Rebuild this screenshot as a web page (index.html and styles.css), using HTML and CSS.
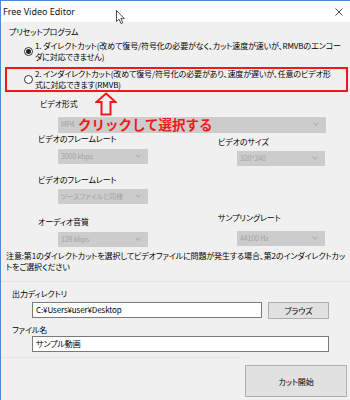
FILE: index.html
```html
<!DOCTYPE html>
<html lang="ja">
<head>
  <meta charset="UTF-8">
  <meta name="viewport" content="width=device-width, initial-scale=1.0">
  <title>Free Video Editor</title>
  <link rel="stylesheet" href="styles.css">
</head>
<body>
  <div class="window">
    <div class="titlebar">
      <span class="title">Free Video Editor</span>
      <svg class="close" width="8" height="8" viewBox="0 0 8 8">
        <path d="M0.5 0.5 L7.5 7.5 M7.5 0.5 L0.5 7.5" stroke="#333" stroke-width="0.9" fill="none"/>
      </svg>
    </div>

    <div class="content">
      <div class="legend">プリセットプログラム</div>

      <div class="option">
        <span class="radio checked"></span>
        <span class="option-text">1. ダイレクトカット(改めて復号/符号化の必要がなく、カット速度が速いが、RMVBのエンコー<br>ダに対応できません)</span>
      </div>

      <div class="option option-marked">
        <span class="radio"></span>
        <span class="option-text">2. インダイレクトカット(改めて復号/符号化の必要があり、速度が遅いが、任意のビデオ形<br>式に対応できます(RMVB)</span>
      </div>

      <div class="label label-format">ビデオ形式</div>
      <div class="select select-wide">MP4<span class="chev"></span></div>

      <div class="row row-first">
        <div class="field">
          <div class="label">ビデオのフレームレート</div>
          <div class="select">3000 kbps<span class="chev"></span></div>
        </div>
        <div class="field field-right">
          <div class="label label-low">ビデオのサイズ</div>
          <div class="select select-right">320*240<span class="chev"></span></div>
        </div>
      </div>

      <div class="row row-second">
        <div class="field">
          <div class="label">ビデオのフレームレート</div>
          <div class="select">ソースファイルと同様<span class="chev"></span></div>
        </div>
      </div>

      <div class="row row-third">
        <div class="field">
          <div class="label label-audio">オーディオ音質</div>
          <div class="select">128 kbps<span class="chev"></span></div>
        </div>
        <div class="field field-right">
          <div class="label">サンプリングレート</div>
          <div class="select select-right select-rate">44100 Hz<span class="chev"></span></div>
        </div>
      </div>

      <p class="note">注意:第1のダイレクトカットを選択してビデオファイルに問題が発生する場合、第2のインダイレクトカッ<br>トをご選択ください</p>

      <div class="divider"></div>

      <div class="label label-out">出力ディレクトリ</div>
      <div class="path-row">
        <div class="textbox textbox-path">C:¥Users¥user¥Desktop</div>
        <div class="button button-browse">ブラウズ</div>
      </div>

      <div class="label label-out label-name">ファイル名</div>
      <div class="textbox textbox-name">サンプル動画</div>

      <div class="divider divider-bottom"></div>

      <div class="button button-start">カット開始</div>
    </div>

    <!-- annotations drawn over the dialog -->
    <svg class="arrow" width="22" height="24" viewBox="0 0 22 24">
      <path d="M11 1.5 L20.5 10 L15.5 10 L15.5 22.5 L6.5 22.5 L6.5 10 L1.5 10 Z" fill="none" stroke="#f01818" stroke-width="2" stroke-linejoin="miter"/>
    </svg>
    <div class="callout">クリックして選択する</div>

    <svg class="cursor" width="10" height="15" viewBox="0 0 10 15">
      <path d="M0.5 0.5 L0.5 11.5 L3 9.2 L5 13.5 L6.8 12.7 L4.9 8.6 L8.3 8.6 Z" fill="#fff" stroke="#222" stroke-width="0.8" stroke-linejoin="round"/>
    </svg>
  </div>
</body>
</html>
```

FILE: styles.css
```css
body {
  margin: 0;
  background: #ffffff;
  font-family: "Noto Sans CJK JP", sans-serif;
  font-size: 8px;
  color: #000;
  font-feature-settings: "palt";
  letter-spacing: -0.12px;
}

.window {
  position: relative;
  width: 349px;
  height: 399px;
  border-top: 1px solid #4a8ad8;
  border-left: 1px solid #4a8ad8;
  background: #f0f0f0;
  overflow: hidden;
}

.titlebar {
  height: 21px;
  background: #fff;
  display: flex;
  align-items: center;
  justify-content: space-between;
  padding: 0 7px 0 2px;
  letter-spacing: 0;
}

.title {
  font-family: "Noto Sans", sans-serif;
  font-size: 9px;
  color: #111;
}

.content {
  display: flex;
  flex-direction: column;
  align-items: flex-start;
}

.legend {
  margin: 4px 0 0 8px;
  line-height: 11px;
}

.option {
  display: flex;
  align-items: center;
  gap: 2px;
  margin-top: 4px;
  padding-left: 23px;
  height: 21px;
  white-space: nowrap;
}

.option-text {
  line-height: 10.5px;
}

.option-marked {
  box-sizing: border-box;
  width: 343px;
  height: 25px;
  margin: 5px 0 0 4px;
  padding-left: 17px;
  border: 2px solid #f01818;
}

.radio {
  flex: none;
  box-sizing: border-box;
  width: 9px;
  height: 9px;
  border: 1px solid #333;
  border-radius: 50%;
  background: #fff;
  display: flex;
  align-items: center;
  justify-content: center;
}

.radio.checked::after {
  content: "";
  width: 5px;
  height: 5px;
  border-radius: 50%;
  background: #222;
}

.label {
  line-height: 11px;
  white-space: nowrap;
}

.label-format {
  margin: 6px 0 0 39px;
}

.select {
  position: relative;
  box-sizing: border-box;
  width: 90px;
  height: 15px;
  margin: 5px 0 0 20px;
  padding-left: 3px;
  background: #cccccc;
  color: #a3a3a3;
  font-size: 7px;
  line-height: 15px;
  white-space: nowrap;
}

.select-wide {
  width: 268px;
  height: 16px;
  margin: 8px 0 0 57px;
}

.chev {
  position: absolute;
  right: 8px;
  top: 4px;
  width: 3px;
  height: 3px;
  border-right: 1px solid #b0b0b0;
  border-bottom: 1px solid #b0b0b0;
  transform: rotate(45deg);
}

.row {
  display: grid;
  grid-template-columns: 217px 1fr;
  width: 100%;
}

.field {
  padding-left: 37px;
}

.field-right {
  padding-left: 0;
}

.select-right {
  width: 88px;
  margin-left: 19px;
  margin-top: 4px;
}

.label-low {
  margin-top: 3px;
}

.row-second {
  margin-top: 8px;
}

.row-second .select {
  margin-top: 4px;
}

.row-third {
  margin-top: 8px;
}

.label-audio {
  margin-top: 4px;
}

.select-rate {
  margin-top: 8px;
}

.note {
  margin: 3px 0 0 5px;
  line-height: 11px;
  white-space: nowrap;
}

.divider {
  width: 100%;
  height: 1px;
  margin-top: 9px;
  background: #e4e4e4;
}

.divider-bottom {
  width: 240px;
  margin-top: 5px;
}

.label-out {
  margin: 6px 0 0 11px;
}

.label-name {
  margin-top: 5px;
}

.path-row {
  display: flex;
  gap: 6px;
  margin: 3px 0 0 31px;
}

.textbox {
  box-sizing: border-box;
  height: 16px;
  padding-left: 3px;
  border: 1px solid #7a7a7a;
  background: #fff;
  line-height: 14px;
  white-space: nowrap;
}

.textbox-path {
  width: 230px;
}

.textbox-name {
  width: 297px;
  margin: 1px 0 0 31px;
}

.button {
  box-sizing: border-box;
  border: 1px solid #adadad;
  background: #e1e1e1;
  display: flex;
  align-items: center;
  justify-content: center;
}

.button-browse {
  width: 61px;
  height: 17px;
}

.button-start {
  width: 102px;
  height: 32px;
  margin: 7px 0 0 244px;
}

.arrow {
  position: absolute;
  left: 94px;
  top: 91px;
}

.callout {
  position: absolute;
  left: 77px;
  top: 115px;
  font-size: 13.5px;
  font-weight: bold;
  line-height: 16px;
  color: #f01818;
  font-feature-settings: normal;
  letter-spacing: 0;
  white-space: nowrap;
}

.cursor {
  position: absolute;
  left: 115px;
  top: 9px;
}
```
